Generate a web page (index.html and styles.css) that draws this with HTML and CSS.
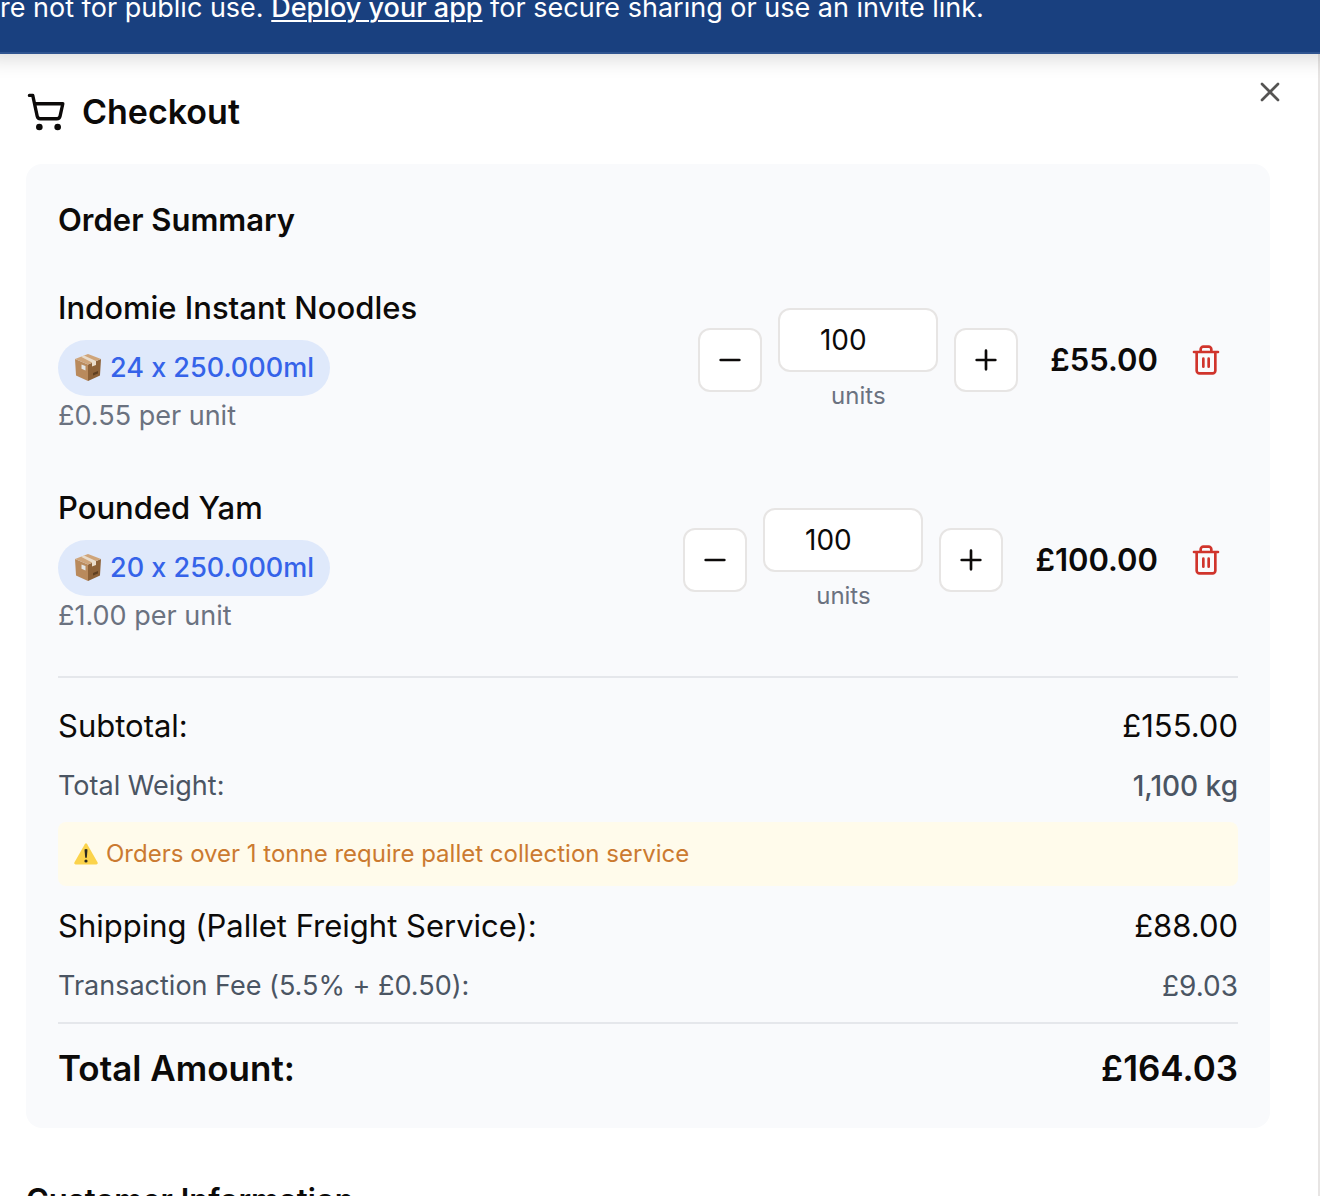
FILE: index.html
```html
<!DOCTYPE html>
<html lang="en">
<head>
<meta charset="utf-8">
<meta name="viewport" content="width=device-width, initial-scale=1">
<title>Checkout</title>
<link rel="stylesheet" href="styles.css">
</head>
<body>
<svg class="sprite" aria-hidden="true">
  <symbol id="minus" viewBox="0 0 24 24"><path d="M5 12h14"/></symbol>
  <symbol id="plus" viewBox="0 0 24 24"><path d="M5 12h14M12 5v14"/></symbol>
  <symbol id="trash" viewBox="0 0 24 24"><path d="M3 6h18M19 6v14c0 1-1 2-2 2H7c-1 0-2-1-2-2V6M8 6V4c0-1 1-2 2-2h4c1 0 2 1 2 2v2M10 11v6M14 11v6"/></symbol>
  <symbol id="package" viewBox="0 0 28 28">
    <path fill="#b98a5c" d="M1 5 14 10.500V27L2 21.500Z"/>
    <path fill="#8d6238" d="M14 10.500 27 5 26 21.500 14 27Z"/>
    <path fill="#cfa57a" d="M1 5 14 0 27 5 14 10.500Z"/>
    <path fill="#e9dccb" d="M7 2.700 10 1.500 22 7v4l-4 1.500V8.500Z"/>
    <path fill="#e4e5e4" d="m7.500 10.500 4 1.500v4.500l-4-1.800Z"/>
    <path fill="#5f3f20" d="m19 19 5-2v2.500l-5 2Z"/>
  </symbol>
  <symbol id="warning" viewBox="0 0 24 22">
    <path fill="#fbd34b" d="M10.800 1.200q1.200-1.900 2.400 0l10.300 18q.900 2-1.200 2.200H1.700Q-.4 21.200.5 19.200Z"/>
    <path fill="#2b2a22" d="M10.500 6.500q1.500-1.200 3 0l-.7 8.300h-1.600Z"/>
    <circle fill="#2b2a22" cx="12" cy="18" r="1.600"/>
  </symbol>
</svg>

<div class="app">
  <div class="banner">
    <p class="banner-text">re not for public use. <a href="#">Deploy your app</a> for secure sharing or use an invite link.</p>
  </div>

  <main class="dialog">
    <header class="dialog-header">
      <h1 class="title">
        <svg class="cart" viewBox="0 0 24 24" aria-hidden="true"><circle cx="8" cy="21" r="1"/><circle cx="19" cy="21" r="1"/><path d="M2.050 2.050h2l2.660 12.420a2 2 0 0 0 2 1.580h9.780a2 2 0 0 0 1.950-1.570l1.650-7.430H5.120"/></svg>
        Checkout
      </h1>
      <button class="close" type="button" aria-label="Close"><svg class="icon" viewBox="0 0 24 24"><path d="M18 6 6 18M6 6l12 12"/></svg></button>
    </header>

    <section class="card">
      <h2 class="heading">Order Summary</h2>

      <div class="items">
        <article class="item">
          <div class="info">
            <h3 class="name">Indomie Instant Noodles</h3>
            <span class="pill"><svg class="package" aria-hidden="true"><use href="#package"/></svg>24 x 250.000ml</span>
            <p class="small muted">£0.55 per unit</p>
          </div>
          <div class="controls">
            <div class="stepper">
              <button class="step" type="button" aria-label="Decrease noodles"><svg class="icon"><use href="#minus"/></svg></button>
              <div class="quantity">
                <input class="field" id="qty-noodles" type="number" value="100">
                <label class="units" for="qty-noodles">units</label>
              </div>
              <button class="step" type="button" aria-label="Increase noodles"><svg class="icon"><use href="#plus"/></svg></button>
            </div>
            <span class="price">£55.00</span>
            <button class="remove" type="button" aria-label="Remove noodles"><svg class="icon"><use href="#trash"/></svg></button>
          </div>
        </article>

        <article class="item">
          <div class="info">
            <h3 class="name">Pounded Yam</h3>
            <span class="pill"><svg class="package" aria-hidden="true"><use href="#package"/></svg>20 x 250.000ml</span>
            <p class="small muted">£1.00 per unit</p>
          </div>
          <div class="controls">
            <div class="stepper">
              <button class="step" type="button" aria-label="Decrease yam"><svg class="icon"><use href="#minus"/></svg></button>
              <div class="quantity">
                <input class="field" id="qty-yam" type="number" value="100">
                <label class="units" for="qty-yam">units</label>
              </div>
              <button class="step" type="button" aria-label="Increase yam"><svg class="icon"><use href="#plus"/></svg></button>
            </div>
            <span class="price">£100.00</span>
            <button class="remove" type="button" aria-label="Remove yam"><svg class="icon"><use href="#trash"/></svg></button>
          </div>
        </article>
      </div>

      <div class="totals">
        <div class="row"><span>Subtotal:</span><span>£155.00</span></div>
        <div class="row small slate"><span>Total Weight:</span><span class="detail medium">1,100 kg</span></div>
        <p class="notice"><svg class="warning" aria-hidden="true"><use href="#warning"/></svg>Orders over 1 tonne require pallet collection service</p>
        <div class="row"><span>Shipping (Pallet Freight Service):</span><span>£88.00</span></div>
        <div class="row small slate"><span>Transaction Fee (5.5% + £0.50):</span><span class="detail">£9.03</span></div>
        <div class="row grand"><span>Total Amount:</span><span>£164.03</span></div>
      </div>
    </section>

    <h2 class="heading">Customer Information</h2>
  </main>
</div>
</body>
</html>
```
FILE: styles.css
```css
* { box-sizing: border-box; }

body, h1, h2, h3, p { margin: 0; }

body {
  background: #fff;
  color: #0c0a09;
  font-family: Inter, "Liberation Sans", sans-serif;
  font-feature-settings: "calt" 0;
  font-size: 31px;
  line-height: 48px;
}

button, input { font: inherit; color: inherit; }

button {
  display: flex;
  align-items: center;
  justify-content: center;
  padding: 0;
  border: 0;
  background: none;
  cursor: pointer;
}

.sprite { display: none; }

.app {
  display: flex;
  flex-direction: column;
  height: 100vh;
  overflow: hidden;
}

.banner {
  display: flex;
  flex: none;
  align-items: flex-end;
  height: 54px;
  padding-bottom: 24px;
  overflow: hidden;
  border-bottom: 2px solid #2f5490;
  background: #19407f;
  color: #fff;
  position: relative;
  box-shadow: 0 -12px 20px 16px rgb(0 0 0 / 16%);
}

.banner-text {
  font-size: 27px;
  line-height: 40px;
  white-space: nowrap;
}

.banner-text a {
  color: inherit;
  font-weight: 500;
  text-decoration-thickness: 2px;
  text-underline-offset: 3px;
}

.dialog {
  display: flex;
  flex: 1;
  flex-direction: column;
  min-height: 0;
  padding: 38px 48px 0 26px;
  overflow: hidden;
  border-right: 2px solid #e7e5e4;
}

.dialog > * { flex: none; }

.dialog-header {
  display: flex;
  align-items: flex-start;
  justify-content: space-between;
  margin-right: -16px;
  margin-bottom: 32px;
}

.title {
  display: flex;
  align-items: center;
  gap: 16px;
  font-size: 34px;
  font-weight: 600;
  line-height: 40px;
}

svg {
  flex: none;
  fill: none;
  stroke: currentColor;
  stroke-width: 2;
  stroke-linecap: round;
  stroke-linejoin: round;
}

.cart { width: 40px; height: 40px; }
.icon { width: 32px; height: 32px; }
.package { width: 28px; height: 28px; stroke: none; }
.warning { width: 24px; height: 22px; stroke: none; }

.close {
  height: 0;
  color: #555453;
}

.card {
  margin-bottom: 48px;
  padding: 32px;
  border-radius: 16px;
  background: #f9fafc;
}

.heading {
  font-size: 31px;
  font-weight: 600;
}

.items {
  display: flex;
  flex-direction: column;
  gap: 48px;
  padding: 40px 0;
}

.item, .controls, .stepper, .row {
  display: flex;
  align-items: center;
}

.item, .row { justify-content: space-between; }

.name {
  margin-bottom: 8px;
  font-size: 31px;
  font-weight: 500;
}

.pill {
  display: flex;
  align-items: center;
  gap: 8px;
  width: fit-content;
  padding: 8px 16px;
  border-radius: 28px;
  background: #dfe9fb;
  color: #3563e9;
  font-size: 27px;
  font-weight: 500;
  line-height: 40px;
}

.small { font-size: 27px; line-height: 40px; }
.detail { font-size: 28px; }
.muted { color: #6b7280; }
.slate { color: #4b5563; }
.medium { font-weight: 500; }

.stepper { gap: 16px; margin-right: 32px; }

.step {
  width: 64px;
  height: 64px;
  border: 2px solid #e7e5e4;
  border-radius: 12px;
  background: #fff;
}

.quantity {
  display: flex;
  flex-direction: column;
  align-items: center;
  gap: 8px;
}

.field {
  width: 160px;
  height: 64px;
  padding: 0 52px 0 22px;
  border: 2px solid #e7e5e4;
  border-radius: 12px;
  background: #fff;
  font-size: 28px;
  text-align: center;
  appearance: textfield;
}

.field::-webkit-inner-spin-button { appearance: none; margin: 0; }

.units {
  color: #6b7280;
  font-size: 24px;
  line-height: 32px;
}

.price { font-weight: 600; }

.remove {
  width: 64px;
  height: 64px;
  margin-left: 16px;
  color: #d0342c;
}

.totals {
  display: flex;
  flex-direction: column;
  gap: 16px;
  padding-top: 24px;
  border-top: 2px solid #e5e7eb;
}

.notice {
  display: flex;
  align-items: center;
  gap: 8px;
  padding: 16px;
  border-radius: 8px;
  background: #fffbeb;
  color: #cb7a30;
  font-size: 24px;
  line-height: 32px;
}

.grand {
  padding-top: 16px;
  border-top: 2px solid #e5e7eb;
  font-size: 35px;
  font-weight: 600;
  line-height: 56px;
}
```
